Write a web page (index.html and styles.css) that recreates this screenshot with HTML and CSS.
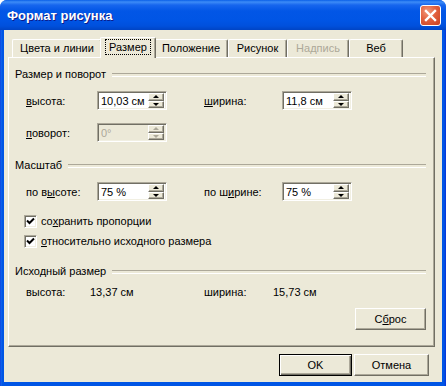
FILE: index.html
```html
<!DOCTYPE html>
<html lang="ru">
<head>
    <meta charset="UTF-8">
    <title>Формат рисунка</title>
    <link rel="stylesheet" href="styles.css">
</head>
<body>
    <div class="window">
        <div class="titlebar">
            <span class="title">Формат рисунка</span>
            <span class="close">
                <svg width="13" height="13" viewBox="0 0 13 13"><path d="M2 2 L11 11 M11 2 L2 11" stroke="#fff" stroke-width="2.4" stroke-linecap="square"/></svg>
            </span>
        </div>
        <div class="frame">
            <div class="client">
                <div class="tabs">
                    <div class="tab">Цвета и линии</div>
                    <div class="tab active"><span class="focus">Размер</span></div>
                    <div class="tab">Положение</div>
                    <div class="tab">Рисунок</div>
                    <div class="tab disabled">Надпись</div>
                    <div class="tab">Веб</div>
                </div>

                <div class="panel">
                    <div class="group">Размер и поворот</div>
                    <div class="row r1">
                        <span class="lbl"><u>в</u>ысота:</span>
                        <div class="spin"><span class="val">10,03 см</span><span class="arrows"><i class="up"></i><i class="down"></i></span></div>
                        <span class="lbl second"><u>ш</u>ирина:</span>
                        <div class="spin"><span class="val">11,8 см</span><span class="arrows"><i class="up"></i><i class="down"></i></span></div>
                    </div>
                    <div class="row r2">
                        <span class="lbl"><u>п</u>оворот:</span>
                        <div class="spin off"><span class="val">0°</span><span class="arrows"><i class="up"></i><i class="down"></i></span></div>
                    </div>

                    <div class="group g2">Масштаб</div>
                    <div class="row r1">
                        <span class="lbl">по в<u>ы</u>соте:</span>
                        <div class="spin"><span class="val">75 %</span><span class="arrows"><i class="up"></i><i class="down"></i></span></div>
                        <span class="lbl second">по ш<u>и</u>рине:</span>
                        <div class="spin"><span class="val">75 %</span><span class="arrows"><i class="up"></i><i class="down"></i></span></div>
                    </div>
                    <label class="check c1">
                        <span class="box"><svg width="9" height="9" viewBox="0 0 9 9"><path d="M1 3.5 L3.5 6 L8 1.5" fill="none" stroke="#000" stroke-width="2"/></svg></span>
                        <span>со<u>х</u>ранить пропорции</span>
                    </label>
                    <label class="check c2">
                        <span class="box"><svg width="9" height="9" viewBox="0 0 9 9"><path d="M1 3.5 L3.5 6 L8 1.5" fill="none" stroke="#000" stroke-width="2"/></svg></span>
                        <span><u>о</u>тносительно исходного размера</span>
                    </label>

                    <div class="group g3">Исходный размер</div>
                    <div class="row info">
                        <span class="lbl">высота:</span>
                        <span class="num">13,37 см</span>
                        <span class="lbl second">ширина:</span>
                        <span class="num">15,73 см</span>
                    </div>
                    <div class="reset-row">
                        <button class="btn reset">С<u>б</u>рос</button>
                    </div>
                </div>

                <div class="footer">
                    <button class="btn ok">OK</button>
                    <button class="btn cancel">Отмена</button>
                </div>
            </div>
        </div>
    </div>
</body>
</html>
```

FILE: styles.css
```css
* {
    margin: 0;
    padding: 0;
    box-sizing: border-box;
}

body {
    font-family: "Liberation Sans", Arial, sans-serif;
    font-size: 11px;
    color: #000;
    background: #fff;
}

u {
    text-decoration: underline;
    text-underline-offset: 1px;
}

.window {
    width: 446px;
    height: 386px;
    display: flex;
    flex-direction: column;
    background: #0055e5;
    border-radius: 7px 7px 0 0;
    overflow: hidden;
}

/* title bar */
.titlebar {
    height: 30px;
    flex: none;
    display: flex;
    align-items: center;
    padding: 0 5px 0 7px;
    background: linear-gradient(to bottom, #0a5fe8 0, #3d8cf7 2px, #1766ee 5px, #0256e6 11px, #0055e5 20px, #0050dc 26px, #0044c4 30px);
}

.title {
    flex: 1;
    color: #fff;
    font-weight: bold;
    font-size: 13px;
    text-shadow: 1px 1px #0c1b8a;
}

.close {
    width: 21px;
    height: 21px;
    display: flex;
    align-items: center;
    justify-content: center;
    border: 1px solid #fff;
    border-radius: 3px;
    background: radial-gradient(circle at 35% 30%, #f29a7c 0, #e2613f 45%, #c9401f 100%);
}

.frame {
    flex: 1;
    display: flex;
    padding: 0 4px 4px;
    background: linear-gradient(to right, #0831d9 0, #166aee 1px, #0055e5 2px, #0055e5 calc(100% - 2px), #0831d9 100%);
}

.client {
    flex: 1;
    display: flex;
    flex-direction: column;
    background: #ece9d8;
    padding: 7px 7px 0 4px;
}

/* tabs */
.tabs {
    height: 20px;
    display: flex;
    align-items: flex-end;
    padding-left: 4px;
}

.tab {
    height: 18px;
    display: flex;
    align-items: center;
    justify-content: center;
    border-top: 1px solid #fff;
    border-left: 1px solid #fff;
    border-right: 1px solid #716f64;
    border-radius: 2px 2px 0 0;
    box-shadow: inset -1px 0 #aca899;
    padding-bottom: 1px;
}

.tab:nth-child(1) { width: 90px; }
.tab:nth-child(2) { width: 56px; }
.tab:nth-child(3) { width: 74px; }
.tab:nth-child(4) { width: 59px; }
.tab:nth-child(5) { width: 62px; }
.tab:nth-child(6) { width: 54px; }

.tab.active {
    height: 21px;
    margin: 0 -2px -1px;
    position: relative;
    z-index: 1;
    background: #ece9d8;
    padding-bottom: 2px;
}

.tab.disabled {
    color: #aca899;
}

.focus {
    border: 1px dotted #000;
    padding: 1px 3px;
}

/* panel */
.panel {
    height: 290px;
    flex: none;
    border: 1px solid;
    border-color: #fff #716f64 #716f64 #fff;
    box-shadow: inset -1px -1px #aca899;
    padding: 9px 8px 0 6px;
}

.group {
    height: 14px;
    display: flex;
    align-items: center;
    gap: 6px;
}

.group::after {
    content: "";
    flex: 1;
    height: 2px;
    border-top: 1px solid #aca899;
    border-bottom: 1px solid #fff;
    margin-top: 1px;
}

.g2 { margin-top: 16px; }
.g3 { margin-top: 15px; }

.row {
    height: 19px;
    display: flex;
    align-items: center;
    padding-left: 11px;
    margin-top: 10px;
    white-space: nowrap;
}

.r2 { margin-top: 13px; }

.lbl {
    width: 71px;
}

.lbl.second {
    width: 78px;
    margin-left: 37px;
}

.spin {
    width: 70px;
    height: 19px;
    display: flex;
    align-items: center;
    background: #fff;
    border: 1px solid;
    border-color: #aca899 #fff #fff #aca899;
    box-shadow: inset 1px 1px #716f64, inset -1px -1px #f1efe2;
    padding: 2px 2px 2px 3px;
}

.spin .val {
    flex: 1;
}

.arrows {
    width: 16px;
    height: 15px;
    flex: none;
    display: flex;
    flex-direction: column;
}

.arrows i {
    flex: 1;
    display: flex;
    align-items: center;
    justify-content: center;
    background: #ece9d8;
    border: 1px solid;
    border-color: #fff #716f64 #716f64 #fff;
    box-shadow: inset -1px -1px #aca899;
}

.arrows i::before {
    content: "";
    border-left: 3px solid transparent;
    border-right: 3px solid transparent;
}

.arrows .up::before { border-bottom: 3px solid #000; }
.arrows .down::before { border-top: 3px solid #000; }

.spin.off {
    background: #ece9d8;
    color: #aca899;
}

.spin.off .arrows .up::before { border-bottom-color: #aca899; }
.spin.off .arrows .down::before { border-top-color: #aca899; }

/* checkboxes */
.check {
    height: 16px;
    display: flex;
    align-items: center;
    gap: 4px;
    padding-left: 9px;
    margin-top: 4px;
}

.check.c1 { margin-top: 12px; }

.box {
    width: 13px;
    height: 13px;
    display: flex;
    align-items: center;
    justify-content: center;
    background: #fff;
    border: 1px solid;
    border-color: #aca899 #fff #fff #aca899;
    box-shadow: inset 1px 1px #716f64, inset -1px -1px #f1efe2;
}

/* original size */
.info {
    height: 14px;
    margin-top: 7px;
}

.info .lbl { width: 64px; }
.info .num { width: 114px; }
.info .lbl.second { width: 69px; margin-left: 0; }

.reset-row {
    display: flex;
    justify-content: flex-end;
    margin-top: 9px;
}

/* buttons */
.btn {
    height: 22px;
    font-family: inherit;
    font-size: 11px;
    background: #ece9d8;
    border: 1px solid;
    border-color: #fff #716f64 #716f64 #fff;
    box-shadow: inset -1px -1px #aca899;
}

.reset { width: 71px; }

.footer {
    flex: 1;
    display: flex;
    justify-content: flex-end;
    align-items: center;
    gap: 2px;
    padding-right: 6px;
}

.ok {
    width: 73px;
    border: 1px solid #000;
    box-shadow: inset 1px 1px #fff, inset -1px -1px #716f64, inset -2px -2px #aca899;
}

.cancel { width: 75px; }
```
